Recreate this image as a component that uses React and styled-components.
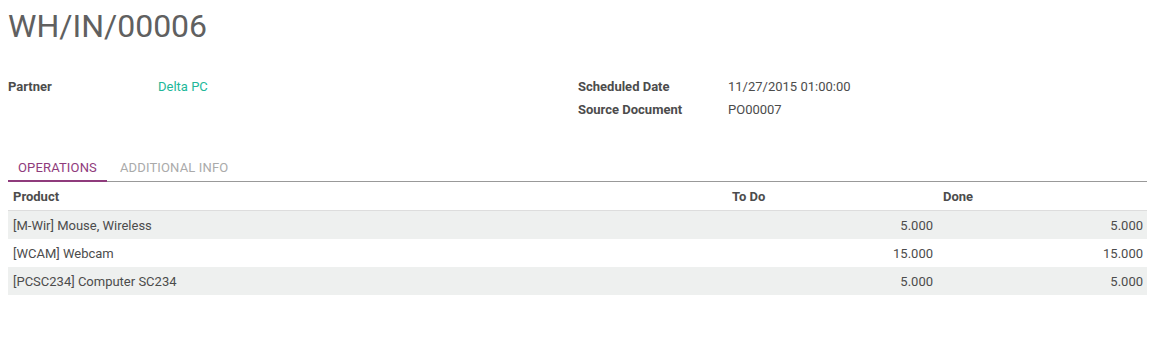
import React from "react";
import styled, { createGlobalStyle } from "styled-components";

const GlobalStyle = createGlobalStyle`
  body {
    margin: 0;
    background: #fff;
    font-family: Roboto, "Noto Sans", sans-serif;
    font-size: 13px;
    color: #4c4c4c;
  }
`;

const rows = [
  { product: "[M-Wir] Mouse, Wireless", todo: "5.000", done: "5.000" },
  { product: "[WCAM] Webcam", todo: "15.000", done: "15.000" },
  { product: "[PCSC234] Computer SC234", todo: "5.000", done: "5.000" },
];

function App() {
  return (
    <>
      <GlobalStyle />
      <StyledSheet>
        <StyledTitle>WH/IN/00006</StyledTitle>
        <StyledGroups>
          <StyledGroup>
            <StyledLabel>Partner</StyledLabel>
            <StyledLink>Delta PC</StyledLink>
          </StyledGroup>
          <StyledGroup>
            <StyledLabel>Scheduled Date</StyledLabel>
            <div>11/27/2015 01:00:00</div>
            <StyledLabel>Source Document</StyledLabel>
            <div>PO00007</div>
          </StyledGroup>
        </StyledGroups>
        <StyledTabs>
          <StyledTab $active>OPERATIONS</StyledTab>
          <StyledTab>ADDITIONAL INFO</StyledTab>
        </StyledTabs>
        <StyledTable>
          <colgroup>
            <col />
            <col width="210" />
            <col width="210" />
          </colgroup>
          <thead>
            <tr>
              <StyledTh>Product</StyledTh>
              <StyledTh>To Do</StyledTh>
              <StyledTh $indent>Done</StyledTh>
            </tr>
          </thead>
          <tbody>
            {rows.map((row) => (
              <StyledRow key={row.product}>
                <StyledTd>{row.product}</StyledTd>
                <StyledTd $num>{row.todo}</StyledTd>
                <StyledTd $num>{row.done}</StyledTd>
              </StyledRow>
            ))}
          </tbody>
        </StyledTable>
      </StyledSheet>
    </>
  );
}

export default App;

const StyledSheet = styled.div`
  width: 1139px;
  padding: 0 8px;
`;

const StyledTitle = styled.h1`
  margin: 0;
  padding-top: 6px;
  font-size: 32px;
  font-weight: 400;
  line-height: 40px;
  color: #606060;
`;

const StyledGroups = styled.div`
  display: grid;
  grid-template-columns: 570px 1fr;
  margin-top: 29px;
`;

const StyledGroup = styled.div`
  display: grid;
  grid-template-columns: 150px 1fr;
  grid-auto-rows: 23px;
  align-items: center;
`;

const StyledLabel = styled.div`
  font-weight: 700;
`;

const StyledLink = styled.div`
  color: #21b799;
`;

const StyledTabs = styled.div`
  display: flex;
  gap: 3px;
  margin-top: 33px;
  border-bottom: 1px solid #999;
`;

const StyledTab = styled.div`
  padding: 2px 10px 0;
  height: 24px;
  line-height: 24px;
  letter-spacing: 0.15px;
  color: ${({ $active }) => ($active ? "#8f3b7c" : "#aaa")};
  border-bottom: 2px solid ${({ $active }) => ($active ? "#8f3b7c" : "transparent")};
  margin-bottom: -1px;
`;

const StyledTable = styled.table`
  width: 100%;
  table-layout: fixed;
  border-collapse: collapse;
`;

const StyledTh = styled.th`
  text-align: left;
  font-weight: 700;
  height: 28px;
  padding: 0 5px 0 ${({ $indent }) => ($indent ? "6px" : "5px")};
  border-bottom: 1px solid #ddd;
`;

const StyledRow = styled.tr`
  &:nth-child(odd) {
    background: #eef0ef;
  }
`;

const StyledTd = styled.td`
  height: 28px;
  padding: 0 ${({ $num }) => ($num ? "4px" : "5px")} 0 5px;
  text-align: ${({ $num }) => ($num ? "right" : "left")};
`;
